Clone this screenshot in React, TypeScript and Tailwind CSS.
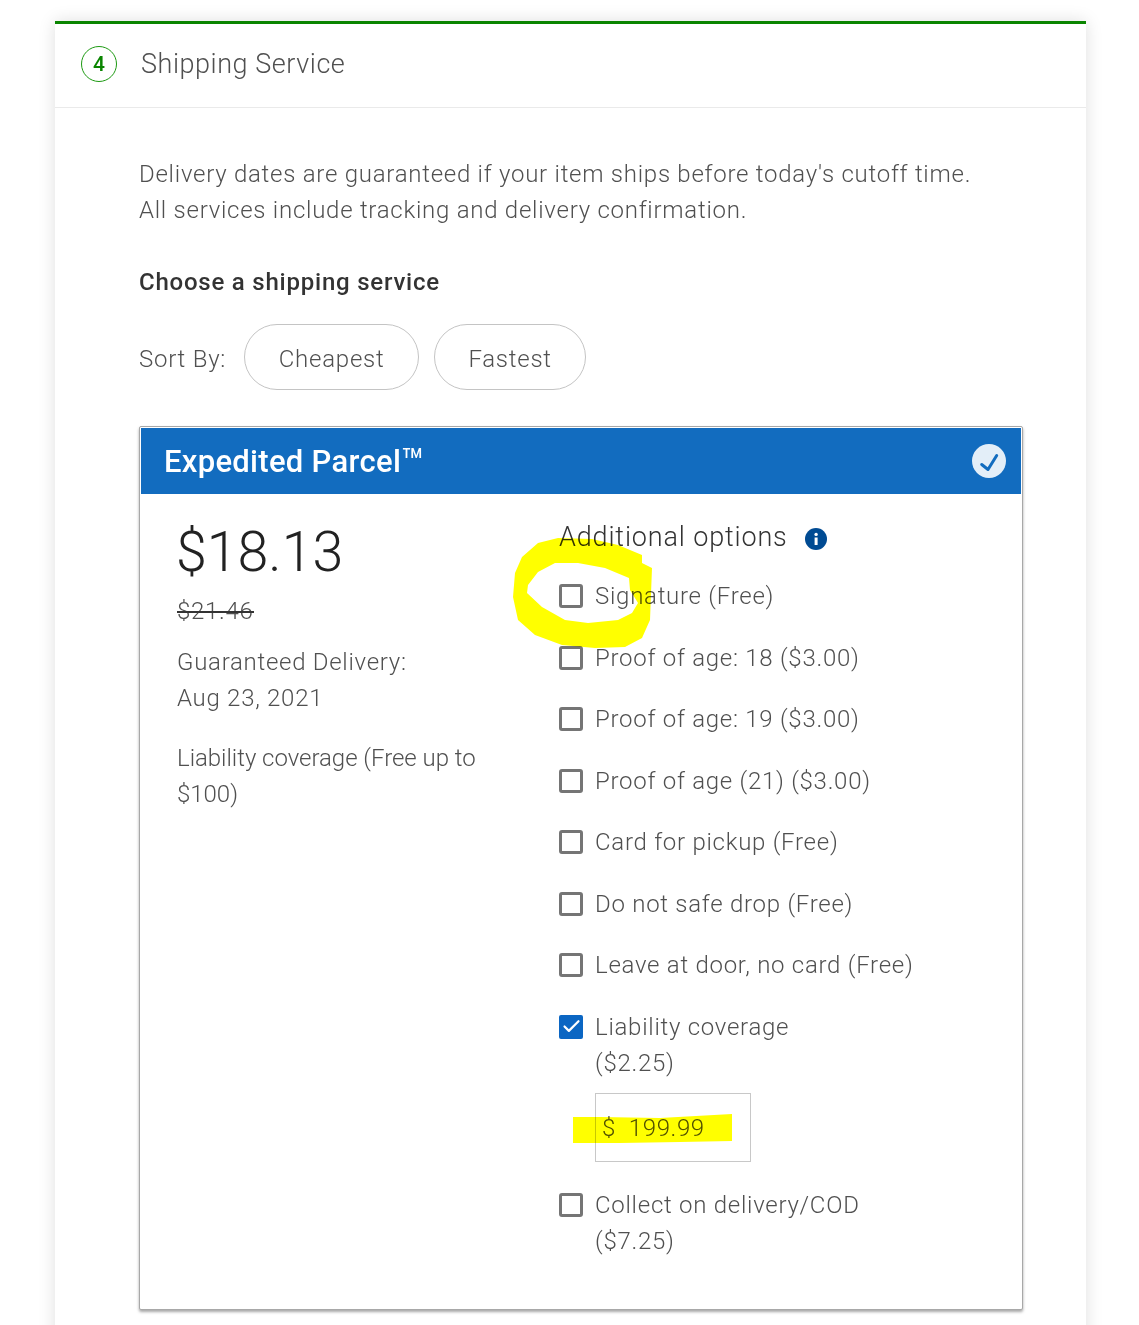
import { Check } from 'lucide-react'

const options = [
  { label: 'Signature (Free)' },
  { label: 'Proof of age: 18 ($3.00)' },
  { label: 'Proof of age: 19 ($3.00)' },
  { label: 'Proof of age (21) ($3.00)' },
  { label: 'Card for pickup (Free)' },
  { label: 'Do not safe drop (Free)' },
  { label: 'Leave at door, no card (Free)' },
]

function Box({ checked }: { checked?: boolean }) {
  return checked ? (
    <span className="mt-1.5 flex h-6 w-6 shrink-0 items-center justify-center rounded-[2px] bg-[#0b66c3]">
      <Check size={21} strokeWidth={2.5} className="text-white" />
    </span>
  ) : (
    <span className="mt-1.5 h-6 w-6 shrink-0 rounded-[3px] border-[3px] border-[#757575] bg-white" />
  )
}

export default function App() {
  return (
    <div className="relative h-[1325px] overflow-hidden bg-white pt-[21px] font-['Roboto',sans-serif] font-light text-[#505050]">
      <div className="ml-[55px] mr-[53px] h-[1400px] border-t-[3px] border-[#0a8500] bg-white shadow-[0_0_16px_rgba(0,0,0,0.13)]">
        {/* step header */}
        <div className="flex h-[84px] items-center border-b border-[#eaeaea] pb-1 pl-[26px]">
          <span className="flex h-9 w-9 items-center justify-center rounded-full border border-[#1d9a12] pt-0.5 text-[21px] font-medium text-[#0a8500]">4</span>
          <h2 className="ml-6 pt-px text-[27px] tracking-[0.55px]">Shipping Service</h2>
        </div>

        <div className="pl-[84px] pr-[63px] pt-[48px]">
          <p className="text-[24px] leading-[36px] tracking-[0.74px]">
            Delivery dates are guaranteed if your item ships before today's cutoff time.<br />
            All services include tracking and delivery confirmation.
          </p>
          <h3 className="mt-[36px] text-[24px] font-medium leading-[36px] tracking-[0.78px] text-[#333]">Choose a shipping service</h3>

          <div className="mt-[24px] flex items-center">
            <span className="mr-[18px] pt-1 text-[24px] tracking-[0.75px]">Sort By:</span>
            <span className="flex h-[66px] w-[175px] items-center justify-center rounded-[33px] border border-[#c4c4c4] pt-1 text-[24px] tracking-[0.75px]">Cheapest</span>
            <span className="ml-[15px] flex h-[66px] w-[152px] items-center justify-center rounded-[33px] border border-[#c4c4c4] pt-1 text-[24px] tracking-[0.75px]">Fastest</span>
          </div>

          {/* service card */}
          <div className="mt-9 h-[884px] rounded-[2px] border border-[#a8a8a8] bg-white p-px shadow-[0_2px_3px_rgba(0,0,0,0.35)]">
            <div className="flex h-[66px] items-center justify-between bg-[#126cbf] pl-[23px] pr-[15px]">
              <span className="pt-0.5 text-[31px] font-medium leading-[36px] tracking-[0.3px] text-white">
                Expedited Parcel<span className="align-[-3px] text-[38px] font-normal leading-none">™</span>
              </span>
              <span className="flex h-[34px] w-[34px] items-center justify-center rounded-full bg-[#e3eef8]">
                <svg viewBox="0 0 34 34" className="h-[34px] w-[34px]" fill="none" stroke="#126cbf" strokeWidth="3" strokeLinecap="round" strokeLinejoin="round">
                  <path d="M9.7 20.5 L16 25.5 L24.7 11.5" />
                </svg>
              </span>
            </div>

            <div className="flex pl-9">
              <div className="w-[382px] pr-[40px]">
                <div className="-ml-px mt-[24px] text-[55.5px] leading-[70px] text-[#222]">$18.13</div>
                <div className="relative mt-[5px] w-fit text-[24px] leading-[36px] tracking-[0.7px]">
                  $21.46
                  <span className="absolute left-0 right-0 top-[18px] h-[2px] bg-[#333]" />
                </div>
                <p className="mt-[15px] text-[24px] leading-[36px] tracking-[0.72px]">Guaranteed Delivery:<br />Aug 23, 2021</p>
                <p className="mt-6 text-[24px] leading-[36px] tracking-[-0.03px]">Liability coverage (Free up to $100)</p>
              </div>

              <div>
                <div className="mt-[24px] flex items-center text-[27px] leading-[38px] tracking-[0.85px] text-[#333]">
                  Additional options
                  <svg viewBox="0 0 22 22" className="ml-[17px] mt-1 h-[22px] w-[22px]">
                    <circle cx="11" cy="11" r="11" fill="#004b93" />
                    <rect x="9.6" y="9.5" width="3" height="7.5" fill="#fff" />
                    <circle cx="11.1" cy="6.4" r="1.7" fill="#fff" />
                  </svg>
                </div>

                <div className="mt-[22px] flex flex-col gap-[25.5px]">
                  {options.map(o => (
                    <label key={o.label} className="flex gap-3 text-[24px] leading-[36px] tracking-[0.73px]">
                      <Box />
                      {o.label}
                    </label>
                  ))}
                  <div>
                    <label className="flex gap-3 text-[24px] leading-[36px] tracking-[0.73px]">
                      <Box checked />
                      <span>Liability coverage<br />($2.25)</span>
                    </label>
                    <div className="ml-9 mt-3 flex h-[69px] w-[156px] items-center whitespace-pre border border-[#c8c8c8] pl-[6px] pt-0.5 text-[24px] tracking-[0.6px]">$  199.99</div>
                  </div>
                  <label className="-mt-[0.5px] flex gap-3 text-[24px] leading-[36px] tracking-[0.73px]">
                    <Box />
                    <span>Collect on delivery/COD<br />($7.25)</span>
                  </label>
                </div>
              </div>
            </div>
          </div>
        </div>
      </div>

      {/* marker scribbles drawn over the screenshot */}
      <svg viewBox="0 0 1139 1325" className="pointer-events-none absolute left-0 top-0 h-[1325px] w-[1139px] mix-blend-multiply">
        <path
          fill="#ffff00"
          fillRule="evenodd"
          d="M558 538 L538 543 L522 557 L515 573 L513 597 L518 620 L535 635 L562 645 L595 648 L625 647 L642 638 L650 620 L652 568 L642 563 L642 555 L618 545 L592 539 Z M555 563 L538 572 L528 585 L527 593 L542 607 L565 620 L588 623 L618 620 L632 613 L638 603 L630 590 L629 578 L605 568 L578 563 Z"
        />
        <path fill="#ffff00" d="M573 1117 L600 1117 L660 1118 L732 1114 L732 1141 L680 1142 L620 1143 L573 1143 Z" />
      </svg>
    </div>
  )
}
